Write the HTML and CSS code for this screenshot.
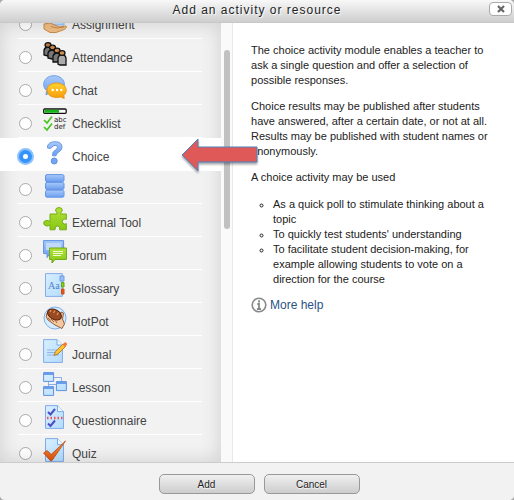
FILE: index.html
```html
<!DOCTYPE html>
<html lang="en">
<head>
<meta charset="utf-8">
<meta name="viewport" content="width=device-width, initial-scale=1">
<title>Add an activity or resource</title>
<link rel="stylesheet" href="styles.css">
</head>
<body>
<svg class="defs" aria-hidden="true">
  <defs>
    <linearGradient id="blue" x1="0" y1="0" x2="0" y2="1"><stop offset="0" stop-color="#a9caf8"/><stop offset="1" stop-color="#6b9df0"/></linearGradient>
    <linearGradient id="page" x1="0" y1="0" x2="1" y2="1"><stop offset="0" stop-color="#d8efff"/><stop offset="1" stop-color="#b4dcfd"/></linearGradient>
    <linearGradient id="green" x1="0" y1="0" x2="0" y2="1"><stop offset="0" stop-color="#b4e23a"/><stop offset="1" stop-color="#86c814"/></linearGradient>
    <linearGradient id="gold" x1="0" y1="0" x2="0" y2="1"><stop offset="0" stop-color="#ffd22e"/><stop offset="1" stop-color="#f79a0c"/></linearGradient>
    <linearGradient id="orange" x1="0" y1="0" x2="0" y2="1"><stop offset="0" stop-color="#f99a3c"/><stop offset="1" stop-color="#e0500c"/></linearGradient>
  </defs>
</svg>
<form class="chooser">
  <header class="titlebar">
    <h1 class="title">Add an activity or resource</h1>
    <button class="close" type="button" aria-label="Close">
      <svg viewBox="0 0 10 10"><path d="M2 2l6 6M8 2L2 8" stroke="#666" stroke-width="2.2"/></svg>
    </button>
  </header>

  <div class="content">
    <div class="options">
      <ul class="list">
        <li class="row"><label class="option"><input type="radio" name="module">
          <svg class="icon" viewBox="0 0 24 24"><path d="M8 2h13v14H8z" fill="url(#page)" stroke="#8fb5ec"/><path d="M1 15l6-1 5 2 4 2 7-1c1 1 0 3-3 4l-7 2.500H7L1 20z" fill="#efbd83" stroke="#c98b4c"/><path d="M8 17.500l6 1.500 7-1" fill="none" stroke="#c98b4c"/></svg>
          <span>Assignment</span></label></li>
        <li class="row"><label class="option"><input type="radio" name="module">
          <svg class="icon" viewBox="0 0 24 24"><g fill="#777" stroke="#111" stroke-width="1.300"><path d="M1 13V8q1-3 4-3t4 3v6H5z"/><ellipse cx="5" cy="3" rx="3" ry="2.300" fill="#b5763f"/><path d="M5 16v-5q1-3 4-3t4 3v6H9z"/><ellipse cx="9.500" cy="5.500" rx="3" ry="2.300" fill="#c98348"/><path d="M10 20v-6q1-3 4-3t4 3v6z"/><ellipse cx="14" cy="8.500" rx="3" ry="2.300" fill="#c98348"/><path d="M15 22v-6q1-3.500 4-3.500t4 3.500v7h-6z" fill="#aaa"/><ellipse cx="19" cy="11" rx="3" ry="2.300" fill="#d48d50"/></g></svg>
          <span>Attendance</span></label></li>
        <li class="row"><label class="option"><input type="radio" name="module">
          <svg class="icon" viewBox="0 0 24 24"><path d="M11 .700c6 0 10.400 3.800 10.400 8.600S17 18 11 18l-4-.600L3 20l.500-4.500C1.600 14 .700 11.700.700 9.300.700 4.500 5 .700 11 .700z" fill="url(#blue)" stroke="#6f9fe8"/><path d="M13.600 8c5.400 0 9.600 3 9.600 7.200 0 2-.900 3.700-2.400 5l.400 3.200-3.500-1.500q-2 .500-4.100.500C8 22.400 4 19.300 4 15.200S8 8 13.600 8z" fill="url(#gold)" stroke="#e59612"/><g fill="#fff"><circle cx="9.700" cy="15" r="1.200"/><circle cx="14" cy="15" r="1.200"/><circle cx="18.300" cy="15" r="1.200"/></g></svg>
          <span>Chat</span></label></li>
        <li class="row"><label class="option"><input type="radio" name="module">
          <svg class="icon" viewBox="0 0 24 24"><rect x=".700" y="1" width="22.500" height="4.300" rx="1" fill="#fff" stroke="#111" stroke-width="1.300"/><path d="M1.500 1.700H16v3H1.500z" fill="#16b416"/><path d="M1 12l3 3 5-6.500M1 19l3 3 5-6.500" fill="none" stroke="#46c71e" stroke-width="1.700"/><g class="checktext"><text x="11" y="14">abc</text><text x="11" y="21">def</text></g></svg>
          <span>Checklist</span></label></li>
        <li class="row selected"><label class="option"><input type="radio" name="module" checked>
          <svg class="icon" viewBox="0 0 24 24"><path d="M4.500 5Q6 .700 12 .700q7 0 7 5.600 0 3-3.500 5-2.500 1.500-2.500 3.500H9.500q-.500-3.800 3-6 2-1.200 2-2.500 0-2-2.500-2-2 0-3.500 2.500-1 1.200-4 .200z" fill="url(#blue)" stroke="#6c9ae6"/><circle cx="11.200" cy="20" r="3" fill="#76a5f2" stroke="#5f8fe2"/></svg>
          <span>Choice</span></label></li>
        <li class="row"><label class="option"><input type="radio" name="module">
          <svg class="icon" viewBox="0 0 24 24"><g fill="url(#blue)" stroke="#6494e6"><rect x="2.500" y=".600" width="18.500" height="7" rx="1.500"/><rect x="2.500" y="8.400" width="18.500" height="7" rx="1.500"/><rect x="2.500" y="16.200" width="18.500" height="7" rx="1.500"/></g></svg>
          <span>Database</span></label></li>
        <li class="row"><label class="option"><input type="radio" name="module">
          <svg class="icon" viewBox="0 0 24 24"><path d="M7 7h7V5.500q-1.500-1-1.500-2.300Q12.700.600 16 .600t3.300 2.600q0 1.300-1.500 2.300V7h5.500v5.500q-1-.5-2-.5-2 .3-2 2.500t2 2.600q1 0 2-.6v6.300h-6.500q.5-3.800-2.300-3.800T12 22.800H7v-5q-1.500 1.500-3.500 1.200Q.7 18.500.7 16t3-2.500q2-.2 3.300 1.200z" fill="url(#green)" stroke="#76ab16"/></svg>
          <span>External Tool</span></label></li>
        <li class="row"><label class="option"><input type="radio" name="module">
          <svg class="icon" viewBox="0 0 24 24"><path d="M.600.600h20v13H7l-3 4v-4H.600z" fill="url(#blue)" stroke="#5f92e4"/><path d="M3 3h15v7H3z" fill="#c1dafc"/><path d="M6.600 8h16.800v11.400H12L9 23v-3.600H6.600z" fill="url(#green)" stroke="#6ca610"/><path d="M10 11.500h10M10 13.500h10M10 15.500h8" stroke="#f2fbd8"/></svg>
          <span>Forum</span></label></li>
        <li class="row"><label class="option"><input type="radio" name="module">
          <svg class="icon" viewBox="0 0 24 24"><path d="M2.500.600h16.800v22.800H2.500z" fill="url(#page)" stroke="#86ade8"/><text class="aa" x="5" y="16">Aa</text><path d="M17 3h4v5h-4z" fill="#9abff6" stroke="#6f9be6"/><path d="M18.500 9.500H21V14h-2.500z" fill="#8bcf16" stroke="#63a510"/><path d="M18.500 16H21v5h-2.500z" fill="#ea5b10" stroke="#c84a0d"/></svg>
          <span>Glossary</span></label></li>
        <li class="row"><label class="option"><input type="radio" name="module">
          <svg class="icon" viewBox="0 0 24 24"><circle cx="12" cy="12" r="11" fill="#d5ebff" stroke="#7fb2ea"/><path d="M4 7q-2 4 1 7l7 5 7 3.500 2.500-4.500-2-5 1-6-2.500-1-1 5z" fill="#f6c8a0" stroke="#7c3f1c" stroke-width=".800"/><ellipse cx="11.500" cy="8.500" rx="7.500" ry="4.800" transform="rotate(28 11.500 8.500)" fill="#9a4a20" stroke="#5c230c"/><path d="M7 6l1-2M10.500 7l1.500-2.500M14 9l1.500-2.500" fill="none" stroke="#d99a68" stroke-width="1.200"/><path d="M5 12l3 2.500M8 13l3 3M12 14l2 3" stroke="#8a4a24" stroke-width=".800"/></svg>
          <span>HotPot</span></label></li>
        <li class="row"><label class="option"><input type="radio" name="module">
          <svg class="icon" viewBox="0 0 24 24"><path d="M.600.600H14l5.400 5.400v17.400H.600z" fill="url(#page)" stroke="#80aae8"/><path d="M14 .600V6h5.400" fill="#ecf7ff" stroke="#80aae8"/><path d="M4 11h10M4 13.500h9M4 16h12" stroke="#8fb4ec"/><path d="M11 16.500l1.500-4L20 5l2.500 2.500-7.500 7.500z" fill="#ffc32d" stroke="#a8701c" stroke-width=".800"/><path d="M19.500 5.500l2-2q1-.5 2 .5t.300 2l-2 2z" fill="#ef7d38"/></svg>
          <span>Journal</span></label></li>
        <li class="row"><label class="option"><input type="radio" name="module">
          <svg class="icon" viewBox="0 0 24 24"><path d="M10 5.500h8.500V10M5.500 9v6M5.500 12.500h8" fill="none" stroke="#8baee8"/><g fill="url(#page)" stroke="#5f91df"><path d="M.600.600h10v8.800H.600zM13.400 9.600h10v9h-10zM.600 14.600h10v8.800H.600z"/></g><path d="M1 2h9.500M14 11h9M1 16h9.500" stroke="#6b9cec" stroke-width="2"/></svg>
          <span>Lesson</span></label></li>
        <li class="row"><label class="option"><input type="radio" name="module">
          <svg class="icon" viewBox="0 0 24 24"><path d="M2.500.600H14.500l6 6v16.800h-18z" fill="url(#page)" stroke="#80aae8"/><path d="M14.500.600v6h6" fill="#ecf7ff" stroke="#80aae8"/><path d="M5 7l2.500 2.500L12 4M5 18.500L7.500 21l4.500-5.500" fill="none" stroke="#4a4fc4" stroke-width="2"/><path d="M4 13h16" stroke="#ef5353" stroke-width="2.500" stroke-dasharray="1.500 2"/></svg>
          <span>Questionnaire</span></label></li>
        <li class="row"><label class="option"><input type="radio" name="module">
          <svg class="icon" viewBox="0 0 24 24"><path d="M2.500.600H14.500l6 6v16.800h-18z" fill="url(#page)" stroke="#80aae8"/><path d="M14.500.600v6h6" fill="#ecf7ff" stroke="#80aae8"/><path d="M.600 15l3.600-2.500 4 4L22.500 3 8.800 22.800H7.500z" fill="url(#orange)" stroke="#bd450c" stroke-width=".800"/></svg>
          <span>Quiz</span></label></li>
      </ul>
    </div>
    <div class="track"><div class="thumb"></div></div>
    <section class="summary">
      <p>The choice activity module enables a teacher to ask a single question and offer a selection of possible responses.</p>
      <p>Choice results may be published after students have answered, after a certain date, or not at all. Results may be published with student names or anonymously.</p>
      <p>A choice activity may be used</p>
      <ul class="uses">
        <li>As a quick poll to stimulate thinking about a topic</li>
        <li>To quickly test students' understanding</li>
        <li>To facilitate student decision-making, for example allowing students to vote on a direction for the course</li>
      </ul>
      <a class="help" href="#help"><svg viewBox="0 0 16 16"><circle cx="8" cy="8" r="6.800" fill="none" stroke="#888" stroke-width="1.600"/><path d="M8 3.300v2.200M6.300 7H8v5M6 12h4" fill="none" stroke="#888" stroke-width="1.800"/></svg><span>More help</span></a>
    </section>
    <svg class="arrow" viewBox="0 0 80 40"><path d="M1 17L17 1v8h59v15H17v9z" fill="#de5957" stroke="#4b86bf"/></svg>
  </div>

  <footer class="actions">
    <button class="action" type="submit">Add</button>
    <button class="action" type="button">Cancel</button>
  </footer>
</form>
</body>
</html>
```
FILE: styles.css
```css
* {
  box-sizing: border-box;
}

body {
  margin: 0;
  background: #aaa;
  color: #222;
  font: 11px/15px "Liberation Sans", Arial, sans-serif;
}

ul, p, h1 {
  margin: 0;
  padding: 0;
}

.defs {
  position: absolute;
  width: 0;
  height: 0;
}

.chooser {
  display: flex;
  flex-direction: column;
  height: 100vh;
  overflow: hidden;
  border-radius: 5px;
  background: #f2f2f2;
}

.titlebar {
  position: relative;
  flex: none;
  padding: 2px 24px 3px;
  border-bottom: 1px solid #c8c8c8;
  background: linear-gradient(#f8f8f8, #cecece);
}

.title {
  font-size: 12px;
  line-height: 17px;
  font-weight: normal;
  letter-spacing: 1px;
  text-align: center;
  text-shadow: 1px 1px 1px #fff;
}

.close {
  position: absolute;
  top: 2px;
  right: 2px;
  display: flex;
  align-items: center;
  justify-content: center;
  width: 23px;
  height: 14px;
  padding: 0;
  border: 1px solid #aaa;
  border-radius: 4px;
  background: #fff;
}

.close svg {
  width: 10px;
  height: 10px;
}

.content {
  position: relative;
  display: flex;
  flex: 1;
  min-height: 0;
  overflow: hidden;
  background: #fff;
}

.options {
  position: relative;
  flex: 0 0 43%;
  overflow: hidden;
  background: #f2f2f2;
}

.options::after {
  content: "";
  position: absolute;
  inset: 0;
  box-shadow: inset 0 0 20px rgba(0, 0, 0, 0.15);
  pointer-events: none;
}

.list {
  margin-top: -17px;
  list-style: none;
}

.row {
  position: relative;
  height: 33px;
  padding: 0 19px 0 18px;
}

.option {
  display: flex;
  height: 33px;
  border-bottom: 1px solid #fff;
  font-size: 12px;
  line-height: 14px;
  color: #444;
}

.selected {
  z-index: 1;
  background: #fff;
}

.option input {
  appearance: none;
  flex: none;
  width: 13px;
  height: 13px;
  margin: 12px 11px 0 1px;
  border: 1px solid #aaa;
  border-radius: 50%;
  background: #fff;
}

.option input:checked {
  border: 4px solid #3594fb;
  box-shadow: 0 0 0 2px #8fc2fb;
}

.icon {
  flex: none;
  width: 24px;
  height: 24px;
  margin-top: 3px;
}

.option span {
  margin: 12px 0 0 5px;
}

.checktext {
  font: 7px "DejaVu Sans", sans-serif;
  fill: #222;
}

.aa {
  font: 10px "Liberation Serif", serif;
  fill: #4f7fd0;
}

.track {
  flex: 0 0 12px;
  padding: 27px 2px 0 3px;
  border-right: 1px solid #e8e8e8;
  background: #fafafa;
}

.thumb {
  height: 179px;
  border-radius: 4px;
  background: #c1c1c1;
}

.summary {
  flex: 1;
  min-width: 0;
  padding: 20px 20px 0 18px;
}

.summary p {
  margin-bottom: 11px;
}

.uses {
  margin: 12px 0 10px;
  padding-left: 22px;
  list-style: circle;
}

.help {
  display: inline-flex;
  align-items: center;
  gap: 3px;
  font-size: 12px;
  color: #2a5283;
  text-decoration: none;
}

.help svg {
  width: 16px;
  height: 16px;
}

.arrow {
  position: absolute;
  z-index: 2;
  left: 181px;
  top: 115px;
  width: 80px;
  height: 40px;
  filter: drop-shadow(0 2px 1px rgba(0, 0, 0, 0.35));
}

.actions {
  display: flex;
  flex: none;
  justify-content: center;
  gap: 9px;
  padding: 11px 0 6px 4px;
  border-top: 1px solid #ccc;
  background: #f2f2f2;
}

.action {
  width: 96px;
  height: 20px;
  padding: 0;
  border: 1px solid #999;
  border-radius: 5px;
  background: linear-gradient(#f0f0f0, #cdcdcd);
  font: 10px "Liberation Sans", Arial, sans-serif;
  color: #222;
  text-shadow: 0 1px 1px #fff;
}
```
